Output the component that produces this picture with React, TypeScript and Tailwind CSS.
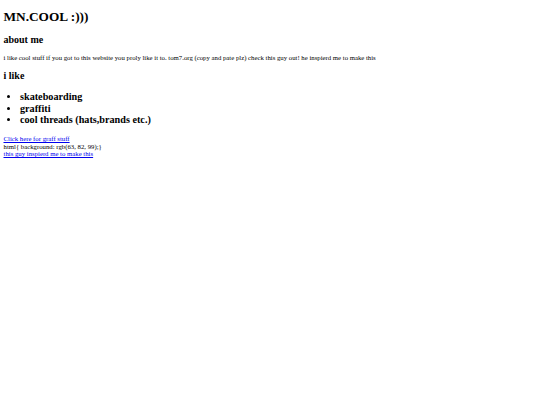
import React from 'react';

const App: React.FC = () => {
  return (
    <div className="min-h-[405px] bg-white text-black font-['Liberation_Serif',serif] text-[6.75px] leading-[1.15] px-[3.5px] pt-[9px]">
      <h1 className="text-[13.3px] font-bold leading-[1.15]">MN.COOL :)))</h1>
      <h2 className="mt-[9.8px] text-[10px] font-bold leading-[1.15]">about me</h2>
      <p className="mt-[8.4px]">
        i like cool stuff if you got to this website you proly like it to. tom7.org (copy and pate plz) check this guy
        out! he inspierd me to make this
      </p>
      <h2 className="mt-[8px] text-[10px] font-bold leading-[1.15]">i like</h2>
      <ul className="mt-[10px] list-disc pl-[16.5px] text-[10.2px] font-bold leading-[1.12]">
        <li>skateboarding</li>
        <li>graffiti</li>
        <li>cool threads (hats,brands etc.)</li>
      </ul>
      <div className="mt-[9.5px]">
        <a href="#" className="text-[#0000ee] underline">Click here for graff stuff</a>
        <br />
        html{'{'} background: rgb(63, 82, 99);{'}'}
        <br />
        <a href="#" className="text-[#0000ee] underline">this guy inspierd me to make this</a>
      </div>
    </div>
  );
};

export default App;
